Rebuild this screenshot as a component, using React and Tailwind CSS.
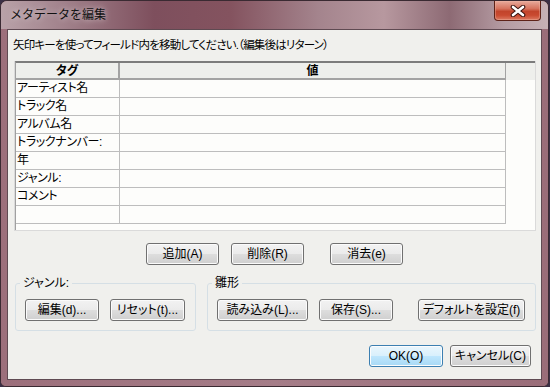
import React from "react";

const FONT = "[font-family:'Liberation_Sans','Noto_Sans_CJK_JP',sans-serif]";

function Btn({ className = "", primary = false, children }) {
  const base =
    "h-[22px] shrink-0 rounded-[3px] border flex items-center justify-center text-[12px] leading-none text-black [font-feature-settings:'palt'] ";
  const normal =
    "border-[#707070] bg-[linear-gradient(#f2f2f2_0%,#ebebeb_48%,#dddddd_52%,#cfcfcf_100%)] shadow-[inset_0_0_0_1px_#fbfbfb] ";
  const prim =
    "border-[#3c7fb1] bg-[linear-gradient(#eaf6fd_0%,#d9f0fc_48%,#bee6fd_52%,#a7d9f5_100%)] shadow-[inset_0_0_0_1px_#fcfcfc] ";
  return <div className={base + (primary ? prim : normal) + className}>{children}</div>;
}

const TAGS = ["アーティスト名", "トラック名", "アルバム名", "トラックナンバー:", "年", "ジャンル:", "コメント", ""];

export default function App() {
  return (
    <div className={"w-[550px] h-[387px] bg-[#3b2f45] overflow-hidden " + FONT}>
      <div className="w-[549px] h-[387px] flex flex-col rounded-t-[7px] rounded-b-[6px] border border-[#3a2a32] bg-[#a57c87] overflow-hidden">
        {/* title bar */}
        <div className="h-[28px] shrink-0 flex items-start justify-between bg-[linear-gradient(90deg,#b9a2a8_0%,#a0808a_12%,#7e4f5d_28%,#84535f_42%,#a4848d_58%,#b7989f_70%,#8d6a74_82%,#b59ca3_92%,#c7b1b6_100%)]">
          <div className="pl-[9px] pt-[6px] text-[12px] leading-[16px] text-[#111] [text-shadow:0_0_6px_#ffffffaa]">
            メタデータを編集
          </div>
          <div className="mr-[7px] w-[47px] h-[20px] rounded-b-[4px] border border-t-0 border-[#5e2218] bg-[linear-gradient(#e8aa9c_0%,#d6735e_40%,#c2442b_55%,#c94a30_75%,#dc7a62_100%)] flex items-center justify-center shadow-[inset_0_0_0_1px_#f0b8a866]">
            <svg width="16" height="12" viewBox="0 0 16 12">
              <path d="M3 2 L13 10 M13 2 L3 10" stroke="#3b1410" strokeWidth="4.6" strokeLinecap="round" fill="none" />
              <path d="M3 2 L13 10 M13 2 L3 10" stroke="#ffffff" strokeWidth="2.6" strokeLinecap="round" fill="none" />
            </svg>
          </div>
        </div>
        {/* body frame */}
        <div className="flex-1 px-[6px] pb-[6px] bg-[linear-gradient(90deg,#9c6f7b_0%,#a57d88_50%,#9a6d79_100%)]">
          <div className="h-full border border-[#5f4a52] bg-[#f0f0ed] flex flex-col text-black">
            <div className="pt-[7px] pl-[5px] h-[23px] text-[11.5px] leading-[16px] tracking-[-0.8px] whitespace-nowrap [font-feature-settings:'palt']">
              矢印キーを使ってフィールド内を移動してください.（編集後はリターン）
            </div>
            {/* table */}
            <div className="mt-[8px] ml-[6px] w-[522px] h-[170px] shrink-0 border border-[#dadada] border-t-0">
              <div className="h-full border-t-2 border-t-[#7c7c7c] border-l border-l-[#a0a0a0] bg-[#fdfdfb] flex flex-col [font-feature-settings:'palt']">
                <div className="flex h-[17px] shrink-0 bg-[#eeefec]">
                  <div className="w-[104px] border-r-2 border-b-2 border-[#a3a3a3] flex items-center justify-center text-[12px] font-bold leading-none">
                    タグ
                  </div>
                  <div className="w-[386px] border-r border-b-2 border-[#a3a3a3] flex items-center justify-center text-[12px] font-bold leading-none">
                    値
                  </div>
                  <div className="flex-1" />
                </div>
                {TAGS.map((t, i) => (
                  <div key={i} className="flex h-[18px] shrink-0">
                    <div className="w-[104px] border-r border-b border-[#bdbdbd] pl-[1px] text-[12px] leading-[17px] tracking-[-0.4px] whitespace-nowrap">
                      {t}
                    </div>
                    <div className="w-[386px] border-r border-b border-[#bdbdbd]" />
                  </div>
                ))}
              </div>
            </div>
            {/* row buttons */}
            <div className="mt-[12px] flex pl-[138px]">
              <Btn className="w-[73px]">追加(A)</Btn>
              <Btn className="w-[73px] ml-[12px]">削除(R)</Btn>
              <Btn className="w-[73px] ml-[26px]">消去(e)</Btn>
            </div>
            {/* groups */}
            <div className="mt-[11px] flex pl-[7px]">
              <fieldset className="w-[181px] border border-[#d5dfe5] rounded-[3px] px-[9px] pt-[9px] pb-[9px]">
                <legend className="-ml-[5px] px-[3px] text-[12px] leading-[14px] [font-feature-settings:'palt']">ジャンル:</legend>
                <div className="flex">
                  <Btn className="w-[74px]">編集(d)...</Btn>
                  <Btn className="w-[75px] ml-[11px]">リセット(t)...</Btn>
                </div>
              </fieldset>
              <fieldset className="ml-[11px] w-[329px] border border-[#d5dfe5] rounded-[3px] px-[9px] pt-[9px] pb-[9px]">
                <legend className="-ml-[5px] px-[3px] text-[12px] leading-[14px]">雛形</legend>
                <div className="flex">
                  <Btn className="w-[91px]">読み込み(L)...</Btn>
                  <Btn className="w-[74px] ml-[11px]">保存(S)...</Btn>
                  <Btn className="w-[107px] ml-[25px]">デフォルトを設定(f)</Btn>
                </div>
              </fieldset>
            </div>
            {/* bottom */}
            <div className="mt-[14px] flex justify-end pr-[10px]">
              <Btn primary className="w-[74px]">OK(O)</Btn>
              <Btn className="w-[81px] ml-[7px]">キャンセル(C)</Btn>
            </div>
          </div>
        </div>
      </div>
    </div>
  );
}
